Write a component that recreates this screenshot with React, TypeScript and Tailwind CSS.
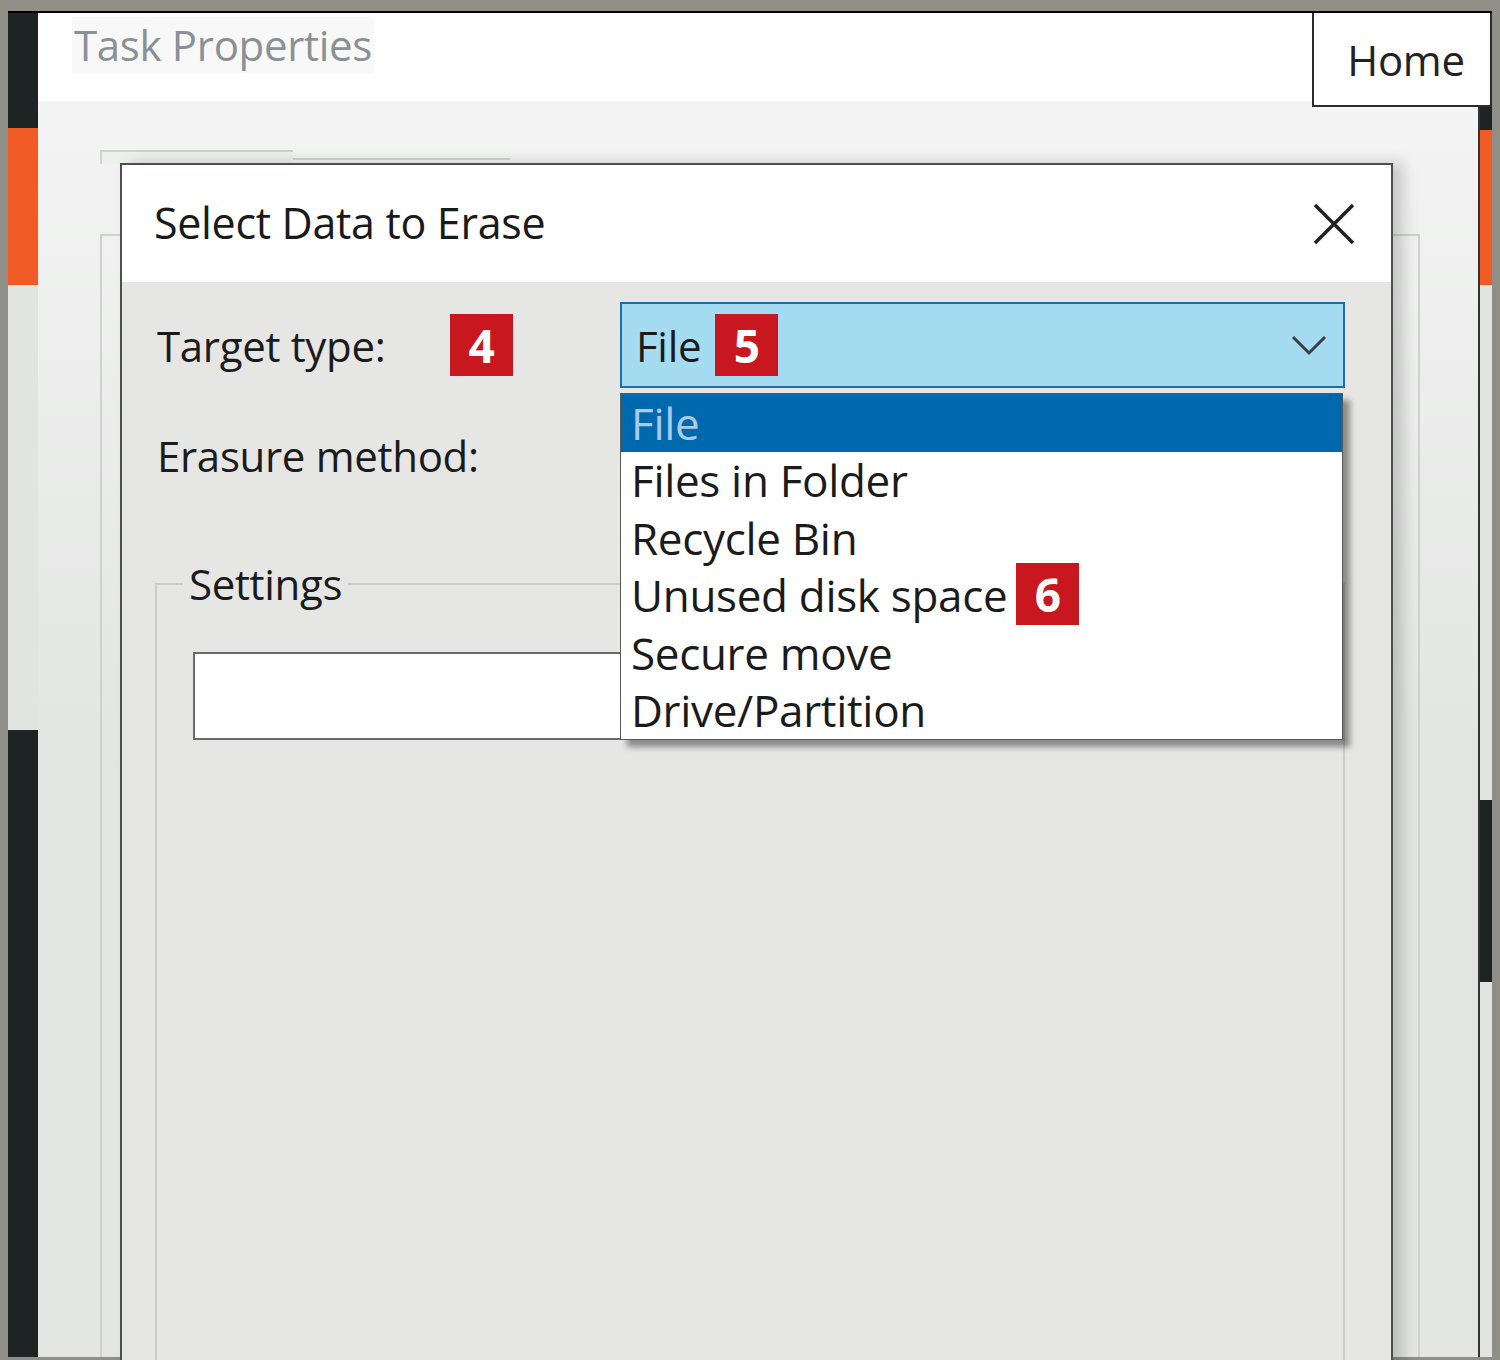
import React from 'react';

const Badge = ({ n }: { n: string }) => (
  <span className="inline-flex items-center justify-center w-[63px] h-[62px] bg-[#c8171f] text-white text-[46px] font-bold leading-none">
    {n}
  </span>
);

const items = ['File', 'Files in Folder', 'Recycle Bin', 'Unused disk space', 'Secure move', 'Drive/Partition'];

const App = () => {
  return (
    <div className="w-[1500px] h-[1360px] overflow-hidden bg-[#8f8f87] pt-[11px] pl-[8px] pr-[8px] pb-[3px] flex font-['Open_Sans',sans-serif] text-[#1b1b1b] tracking-[-0.02em]">
      {/* left app strip */}
      <div className="w-[30px] flex flex-col border-t-2 border-black">
        <div className="h-[115px] bg-[#1e2323]" />
        <div className="h-[157px] bg-[#f05a24]" />
        <div className="h-[445px] bg-[#e2e4e2]" />
        <div className="flex-1 bg-[#1e2323]" />
      </div>

      <div className="flex-1 flex flex-col border-t-2 border-black min-w-0">
        {/* window header */}
        <div className="flex items-start h-[88px] relative z-10">
          <div className="flex-1 h-[88px] bg-white pl-[34px] pt-[4px]">
            <span className="inline-block bg-[#f7f8f7] px-[2px] text-[42px] leading-[56px] text-[#8a9096]">Task Properties</span>
          </div>
          <div className="w-[180px] h-[94px] border-x-2 border-b-2 border-[#2c2c2c] bg-white flex items-center justify-center pl-[8px] text-[42px] text-[#222]">
            Home
          </div>
        </div>

        <div className="flex-1 flex min-h-0">
          {/* content behind the dialog */}
          <div className="flex-1 relative bg-gradient-to-b from-[#f3f4f3] via-[#e4e6e4] to-[#e4e6e4] pl-[62px] pt-[49px] flex flex-col">
            <div className="flex items-end h-[14px]">
              <div className="w-[193px] h-[14px] border-t-2 border-l-2 border-[#d0d2d0] bg-[#eef0ee]" />
              <div className="w-[217px] h-[6px] border-t-2 border-[#d0d2d0]" />
            </div>
            <div className="flex-1 w-[1320px] border-l-2 border-r-2 border-[#cfd1cf] mt-[70px] border-t-2" />

            {/* modal dialog */}
            <div className="absolute left-[82px] top-[62px] w-[1273px] h-[1210px] border-2 border-[#4e4e4e] flex flex-col shadow-[10px_0_14px_rgba(0,0,0,0.18)]">
              <div className="h-[117px] bg-white flex items-center justify-between pl-[32px] pr-[34px]">
                <span className="text-[43px] text-[#1a1a1a]">Select Data to Erase</span>
                <svg width="46" height="46" viewBox="0 0 46 46">
                  <path d="M4 4 L42 42 M42 4 L4 42" stroke="#222" strokeWidth="3.5" />
                </svg>
              </div>

              <div className="flex-1 bg-[#e6e6e4] relative pl-[33px] pr-[46px] pt-[20px] flex flex-col">
                <div className="flex items-center h-[86px] pl-[2px]">
                  <div className="w-[463px] flex items-center">
                    <span className="w-[293px] text-[42px]">Target type:</span>
                    <Badge n="4" />
                  </div>
                  <div className="w-[725px] h-[86px] border-2 border-[#1a6db1] bg-[#a4dbf0] flex items-center pl-[14px] pr-[16px]">
                    <span className="text-[42px]">File</span>
                    <span className="ml-[14px]"><Badge n="5" /></span>
                    <svg className="ml-auto" width="36" height="22" viewBox="0 0 36 22">
                      <path d="M2 3 L18 19 L34 3" fill="none" stroke="#3a3f44" strokeWidth="3" />
                    </svg>
                  </div>
                </div>

                <div className="flex items-center h-[86px] pl-[2px] mt-[24px]">
                  <span className="text-[42px]">Erasure method:</span>
                </div>

                <fieldset className="flex-1 mt-[60px] w-[1190px] border-2 border-b-0 border-[#cbcbcb] pl-[36px] pt-[42px]">
                  <legend className="-ml-[10px] px-[6px] text-[42px] leading-[52px]">Settings</legend>
                  <div className="w-[1112px] h-[88px] border-2 border-[#6b6b6b] bg-white" />
                </fieldset>

                {/* open combobox list */}
                <div className="absolute left-[498px] top-[111px] w-[723px] border border-[#5a5a5a] bg-white shadow-[7px_7px_6px_rgba(0,0,0,0.4)]">
                  {items.map((item, i) => (
                    <div
                      key={item}
                      className={`h-[57.5px] flex items-center pl-[10px] text-[44px] ${i === 0 ? 'bg-[#0069ad] text-[#a9cbe6]' : 'text-[#1b1b1b]'}`}
                    >
                      {item}
                      {item === 'Unused disk space' && (
                        <span className="ml-[9px]"><Badge n="6" /></span>
                      )}
                    </div>
                  ))}
                </div>
              </div>
            </div>
          </div>

          {/* right app strip */}
          <div className="w-[14px] flex flex-col border-l-2 border-[#333] mt-[5px]">
            <div className="h-[24px] bg-[#1e2323]" />
            <div className="h-[155px] bg-[#f05a24]" />
            <div className="h-[515px] bg-[#e2e4e2]" />
            <div className="h-[182px] bg-[#1e2323]" />
            <div className="flex-1 bg-[#e2e4e2]" />
          </div>
        </div>
      </div>
    </div>
  );
};

export default App;
